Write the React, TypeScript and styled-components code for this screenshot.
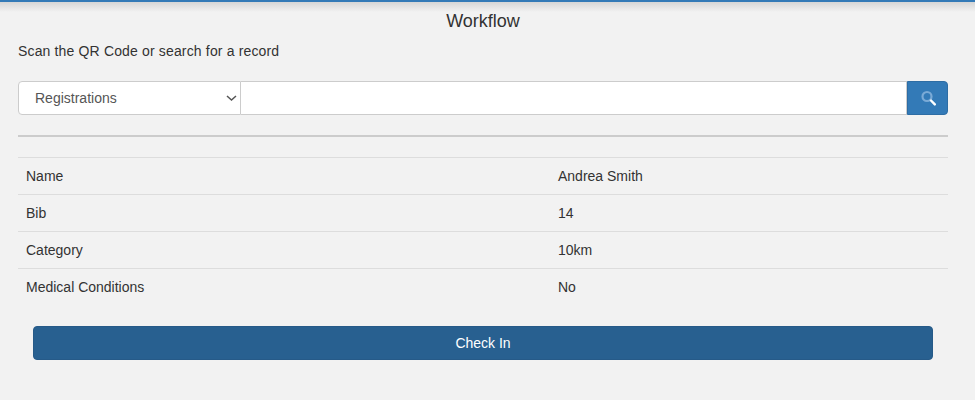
import React from "react";
import styled, { createGlobalStyle } from "styled-components";

const Global = createGlobalStyle`
  html, body { margin: 0; padding: 0; background: #f2f2f2; }
  body { font-family: "Liberation Sans", Arial, sans-serif; font-size: 14px; line-height: 20px; color: #333; }
`;

const Page = styled.div`
  width: 975px;
  height: 400px;
  overflow: hidden;
  box-sizing: border-box;
  border-top: 2px solid #337ab7;
  background: linear-gradient(to bottom, #d6d6d6 0, #f2f2f2 10px, #f2f2f2 100%);
  padding: 0 27px 0 18px;
`;

const Title = styled.h1`
  margin: 8px 0 0;
  font-size: 18px;
  font-weight: 400;
  line-height: 22px;
  text-align: center;
  color: #333;
`;

const Hint = styled.p`
  margin: 9px 0 0;
  line-height: 20px;
  letter-spacing: 0.155px;
`;

const SearchRow = styled.div`
  display: flex;
  height: 34px;
  margin-top: 20px;
`;

const SelectWrap = styled.div`
  position: relative;
  flex: 0 0 223px;
  height: 34px;
`;

const Select = styled.select`
  appearance: none;
  display: block;
  width: 100%;
  height: 34px;
  box-sizing: border-box;
  padding: 0 16px;
  background: #fff;
  border: 1px solid #ccc;
  border-radius: 4px 0 0 4px;
  font: 14px "Liberation Sans", Arial, sans-serif;
  color: #555;
  outline: none;
`;

const Chevron = styled.svg`
  position: absolute;
  right: 4px;
  top: 14px;
  pointer-events: none;
`;

const Input = styled.input`
  flex: 1;
  min-width: 0;
  height: 34px;
  box-sizing: border-box;
  background: #fff;
  border: 1px solid #ccc;
  border-left: 0;
  border-radius: 0;
  outline: none;
`;

const SearchButton = styled.button`
  width: 41px;
  height: 34px;
  padding: 0;
  display: flex;
  align-items: center;
  justify-content: center;
  background: #337ab7;
  border: 1px solid #2e6da4;
  border-radius: 0 4px 4px 0;
`;

const Divider = styled.hr`
  margin: 20px 0 0;
  height: 2px;
  border: 0;
  background: #ccc;
`;

const Table = styled.table`
  width: 100%;
  margin-top: 20px;
  border-collapse: collapse;
  border-spacing: 0;
`;

const Row = styled.tr`
  border-top: 1px solid #ddd;
`;

const Cell = styled.td`
  height: 36px;
  box-sizing: border-box;
  padding: 8px;
  line-height: 20px;
  vertical-align: middle;
  &:first-child { width: 532px; }
`;

const ActionWrap = styled.div`
  padding: 21px 15px 0;
`;

const ActionButton = styled.button`
  display: block;
  width: 100%;
  height: 34px;
  background: #286090;
  border: 1px solid #265a88;
  border-radius: 4px;
  color: #fff;
  font: 14px "Liberation Sans", Arial, sans-serif;
`;

const rows: [string, string][] = [
  ["Name", "Andrea Smith"],
  ["Bib", "14"],
  ["Category", "10km"],
  ["Medical Conditions", "No"],
];

export default function App() {
  return (
    <>
      <Global />
      <Page>
        <Title>Workflow</Title>
        <Hint>Scan the QR Code or search for a record</Hint>
        <SearchRow>
          <SelectWrap>
            <Select defaultValue="Registrations">
              <option>Registrations</option>
            </Select>
            <Chevron width="11" height="6" viewBox="0 0 11 6" fill="none">
              <path d="M1 1 L5.5 5 L10 1" stroke="#555" strokeWidth="1.5" />
            </Chevron>
          </SelectWrap>
          <Input />
          <SearchButton aria-label="Search">
            <svg width="16" height="16" viewBox="-1 0 16 16" fill="none">
              <circle cx="6" cy="6.5" r="4.5" stroke="#7aaad6" strokeWidth="2.2" />
              <path d="M10 10.5 L13.8 14.4" stroke="#fff" strokeWidth="2.4" strokeLinecap="round" />
            </svg>
          </SearchButton>
        </SearchRow>
        <Divider />
        <Table>
          <tbody>
            {rows.map(([k, v]) => (
              <Row key={k}>
                <Cell>{k}</Cell>
                <Cell>{v}</Cell>
              </Row>
            ))}
          </tbody>
        </Table>
        <ActionWrap>
          <ActionButton>Check In</ActionButton>
        </ActionWrap>
      </Page>
    </>
  );
}
